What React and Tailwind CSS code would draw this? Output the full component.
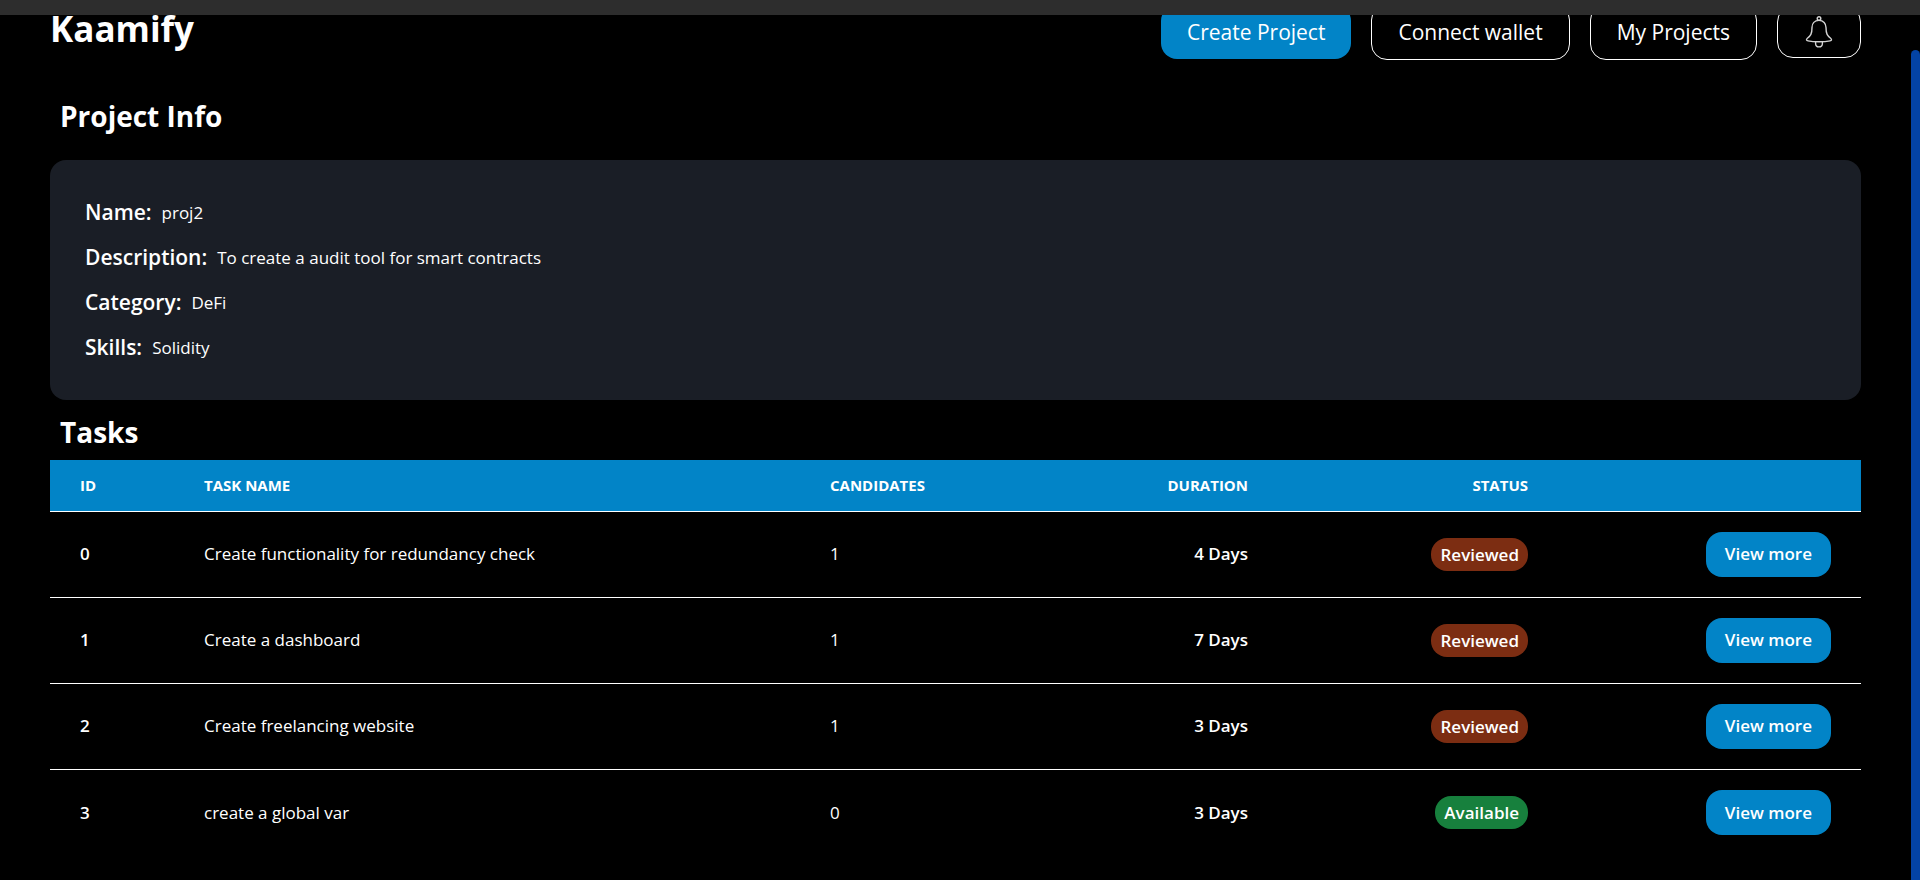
import React, { useState } from 'react';

const project = [
  { label: 'Name:', value: 'proj2' },
  { label: 'Description:', value: 'To create a audit tool for smart contracts' },
  { label: 'Category:', value: 'DeFi' },
  { label: 'Skills:', value: 'Solidity' },
];

const tasks = [
  { id: 0, name: 'Create functionality for redundancy check', candidates: 1, days: 4, status: 'Reviewed' },
  { id: 1, name: 'Create a dashboard', candidates: 1, days: 7, status: 'Reviewed' },
  { id: 2, name: 'Create freelancing website', candidates: 1, days: 3, status: 'Reviewed' },
  { id: 3, name: 'create a global var', candidates: 0, days: 3, status: 'Available' },
];

const getStatusColor = (status) => {
  switch (status) {
    case 'Available':
      return 'bg-[#17803d]';
    default:
      return 'bg-[#7c2d12]';
  }
};

const BellIcon = () => (
  <svg width="28" height="32" viewBox="0 0 28 32" fill="none" stroke="#d4d4d4" strokeWidth="1.4" aria-hidden="true">
    <circle cx="14" cy="2.6" r="1.8" />
    <path d="M14 4.4C9.6 4.4 7 7.4 7 11.6C7 18 5.6 19.8 2.4 22.2C1 23.3 1.2 24.6 3 24.9C6.4 25.6 10 25.8 14 25.8C18 25.8 21.6 25.6 25 24.9C26.8 24.6 27 23.3 25.6 22.2C22.4 19.8 21 18 21 11.6C21 7.4 18.4 4.4 14 4.4Z" />
    <path d="M10.6 25.8V27.4C10.6 32 17.4 32 17.4 27.4V25.8" />
  </svg>
);

const Header = () => (
  <header className="-mt-[11px] flex items-start justify-between">
    <a href="#home" className="text-[35px] leading-[50px] font-bold">
      Kaamify
    </a>
    <nav className="flex items-center gap-5 text-[21px]">
      <button type="button" className="h-[54px] rounded-2xl bg-[#0284c7] px-[26px] pt-0.5">
        Create Project
      </button>
      <button type="button" className="h-14 rounded-2xl border border-white px-[26px] pt-0.5">
        Connect wallet
      </button>
      <button type="button" className="h-14 rounded-2xl border border-white px-[26px] pt-0.5">
        My Projects
      </button>
      <button
        type="button"
        aria-label="Notifications"
        className="flex h-[52px] items-center rounded-2xl border border-white px-[27px]"
      >
        <BellIcon />
      </button>
    </nav>
  </header>
);

const ProjectInfo = () => (
  <section>
    <h2 className="mt-9 px-[10px] text-[28px] leading-10 font-bold">Project Info</h2>
    <dl className="mt-6 rounded-2xl bg-[#1a1e26] px-[35px] py-[30px]">
      {project.map((item) => (
        <div key={item.label} className="flex h-[45px] items-center gap-[10px]">
          <dt className="text-[21px] font-semibold">{item.label}</dt>
          <dd className="text-[17px]">{item.value}</dd>
        </div>
      ))}
    </dl>
  </section>
);

const TaskTable = () => {
  const [selected, setSelected] = useState(null);

  return (
    <section>
      <h2 className="mt-3.5 mb-2.5 px-[10px] text-[28px] leading-9 font-bold">Tasks</h2>
      <table className="w-full table-fixed text-left text-[17px]">
        <thead>
          <tr className="h-[51px] border-b border-white bg-[#0284c7] text-[15px] uppercase">
            <th className="w-[124px] px-[30px] font-bold">Id</th>
            <th className="px-[30px] font-bold">Task Name</th>
            <th className="w-[258px] px-[30px] font-bold">Candidates</th>
            <th className="w-[220px] px-[30px] text-right font-bold">Duration</th>
            <th className="w-[280px] px-[30px] text-right font-bold">Status</th>
            <th className="w-[303px] px-[30px]" aria-label="Actions"></th>
          </tr>
        </thead>
        <tbody>
          {tasks.map((task) => (
            <tr
              key={task.id}
              aria-selected={selected === task.id}
              className="h-[86px] border-b border-white last:border-b-0"
            >
              <td className="px-[30px] font-semibold">{task.id}</td>
              <td className="px-[30px]">{task.name}</td>
              <td className="px-[30px]">{task.candidates}</td>
              <td className="px-[30px] text-right font-semibold">{task.days} Days</td>
              <td className="px-[30px] text-right font-semibold">
                <span className={`inline-block rounded-2xl px-[9px] leading-[33px] ${getStatusColor(task.status)}`}>
                  {task.status}
                </span>
              </td>
              <td className="px-[30px] text-right">
                <button
                  type="button"
                  onClick={() => setSelected(task.id)}
                  className="h-[45px] rounded-2xl bg-[#0284c7] px-[19px] font-semibold"
                >
                  View more
                </button>
              </td>
            </tr>
          ))}
        </tbody>
      </table>
    </section>
  );
};

const App = () => {
  return (
    <div className="flex h-screen flex-col bg-black font-['Open_Sans','Noto_Sans',sans-serif] text-white">
      <div className="h-[15px] shrink-0 bg-[#2d2d2d]"></div>
      <div className="flex min-h-0 flex-1">
        <main className="flex-1 overflow-hidden px-[50px]">
          <Header />
          <ProjectInfo />
          <TaskTable />
        </main>
        {/* Scrollbar */}
        <div className="flex w-[9px] pt-[35px]">
          <div className="flex-1 rounded-t-full bg-[#0343a5]"></div>
        </div>
      </div>
    </div>
  );
};

export default App;
